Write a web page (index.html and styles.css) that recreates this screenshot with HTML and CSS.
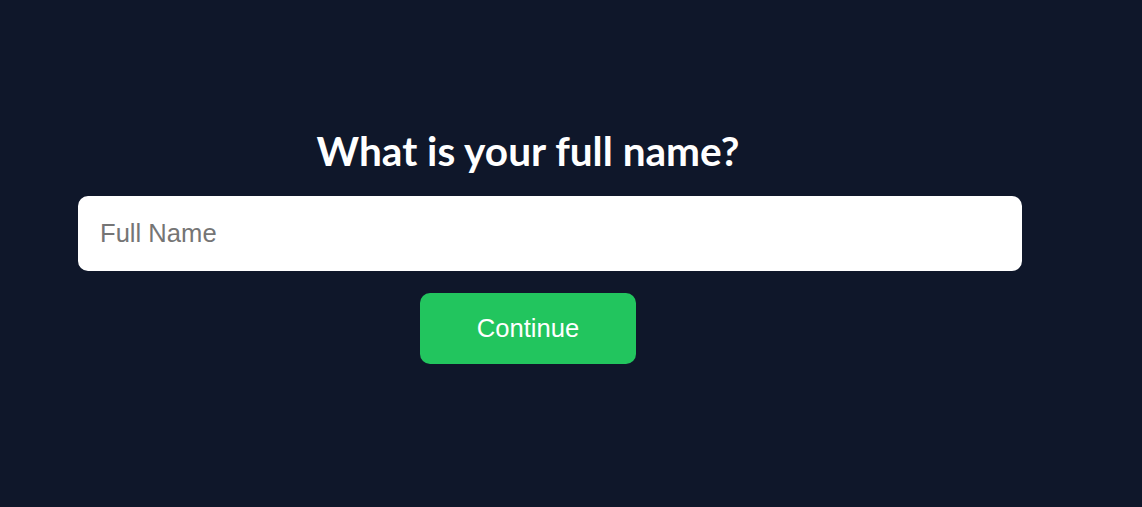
FILE: index.html
```html
<!DOCTYPE html>
<html lang="en">
<head>
  <meta charset="UTF-8">
  <meta name="viewport" content="width=device-width, initial-scale=1.0">
  <title>Full Name</title>
  <link rel="stylesheet" href="styles.css">
</head>
<body>
  <div class="container">
    <h2>What is your full name?</h2>

    <!-- Name input -->
    <input type="text" id="fullName" placeholder="Full Name">

    <button id="continueBtn">Continue</button>
  </div>
</body>
</html>
```

FILE: styles.css
```css
body {
  font-family: "Liberation Sans", Arial, sans-serif;
  background-color: #0f172a;
  margin: 0;
  height: 100vh;
}
.container {
  width: 900px;
  margin-left: 78px;
  padding-top: 126px;
  display: flex;
  flex-direction: column;
  align-items: center;
}
h2 {
  font-family: Lato, "Open Sans", sans-serif;
  font-weight: 700;
  font-size: 40.6px;
  color: #ffffff;
  margin: 0 0 20px 0;
  line-height: 50px;
}
input[type="text"] {
  align-self: flex-start;
  width: 100%;
  padding: 21px 20px;
  border: 2px solid #ffffff;
  border-radius: 10px;
  font-family: "Liberation Sans", Arial, sans-serif;
  font-size: 25.6px;
  color: #111;
  background: #fff;
  outline: none;
}
input::placeholder {
  color: #757575;
}
button {
  margin-top: 22px;
  width: 216px;
  height: 71px;
  background-color: #22c55e;
  color: white;
  border: none;
  border-radius: 10px;
  font-family: "Liberation Sans", Arial, sans-serif;
  font-size: 25.6px;
  cursor: pointer;
}
```
